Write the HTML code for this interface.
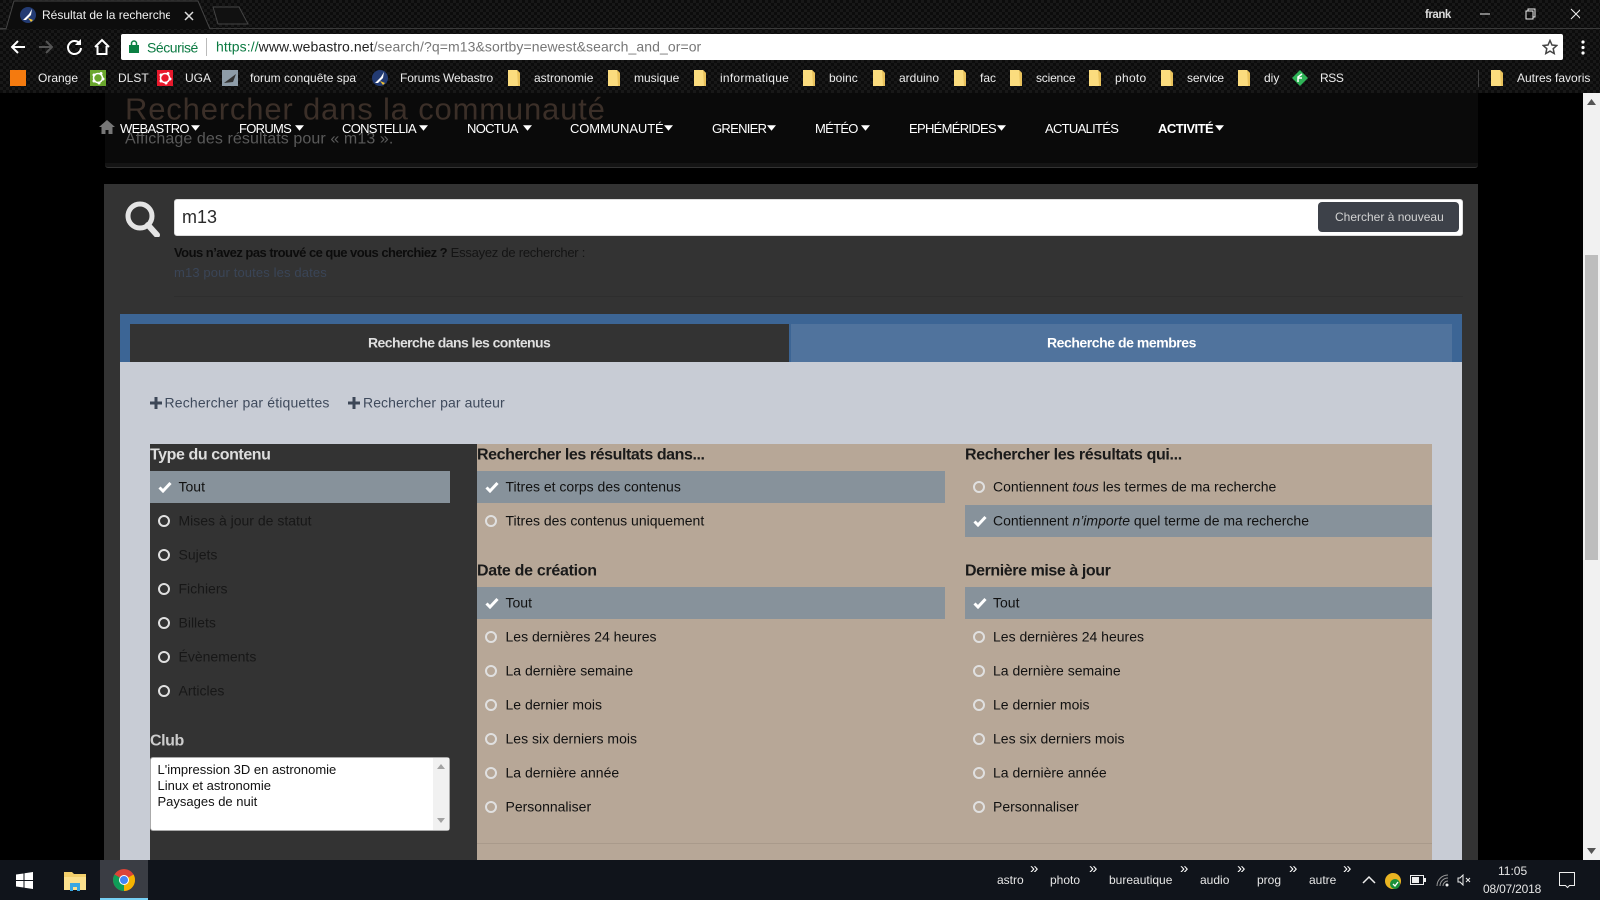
<!DOCTYPE html>
<html lang="fr"><head><meta charset="utf-8"><title>Résultat de la recherche</title>
<style>
html,body{margin:0;padding:0;width:1600px;height:900px;overflow:hidden;background:#000;font-family:"Liberation Sans",sans-serif}
.a{position:absolute}
.t{position:absolute;white-space:nowrap;transform:translateY(-50%);line-height:1.2}
#chrome{position:absolute;left:0;top:0;width:1600px;height:93px;background-color:#0c0c0c;background-image:linear-gradient(45deg,#181818 25%,transparent 25%,transparent 75%,#181818 75%),linear-gradient(45deg,#181818 25%,transparent 25%,transparent 75%,#181818 75%);background-size:6px 6px;background-position:0 0,3px 3px}
.bm{font-size:12px;color:#ececec}
.nav{font-size:13px;color:#fff;top:129px;letter-spacing:-.7px}
.h{font-size:16px;font-weight:bold;letter-spacing:-.42px}
.r{font-size:14px;color:#111}
.dk{color:#171717}
.sel{position:absolute;height:32px;background:#87929b}
.o{position:absolute;width:8px;height:8px;border:2.5px solid #e0e0e0;border-radius:50%;transform:translateY(-50%)}
.ck{position:absolute;transform:translateY(-50%)}
.tb{font-size:12px;color:#e6e6e6;top:880px}
.gt{font-size:15px;color:#fff;top:869px}
</style></head><body>
<svg width="0" height="0" style="position:absolute"><defs>
<symbol id="fd" viewBox="0 0 12 16"><path d="M0 0h9l3 3v13H0z" fill="#fbdc7e"/><path d="M9 0l3 3v13h-2z" fill="#e9c25c"/></symbol>
<symbol id="c" viewBox="0 0 14 12"><path d="M1.500 6.500l3.500 3.500 7.500-8" fill="none" stroke="#fff" stroke-width="3"/></symbol>
<symbol id="p" viewBox="0 0 12 12"><path d="M0 4.500h4.500V0h3v4.500H12v3H7.500V12h-3V7.500H0z" fill="#3c4656"/></symbol>
<symbol id="tr" viewBox="0 0 10 6"><path d="M0 0h10L5 6z" fill="#fff"/></symbol>
<symbol id="fav" viewBox="0 0 16 16"><circle cx="8" cy="8" r="8" fill="#233b73"/><path d="M3 13L9 7l3-5-1 6-5 5z" fill="#fff"/><path d="M8 11l3 4 2-2z" fill="#f2c230"/></symbol>
<symbol id="fl" viewBox="0 0 16 16"><rect width="16" height="16"/><circle cx="8" cy="8" r="4.500" fill="none" stroke="#fff" stroke-width="1.500"/><circle cx="4" cy="5" r="1.500" fill="#fff"/><circle cx="11" cy="3.500" r="1.500" fill="#fff"/><circle cx="13" cy="9" r="1.500" fill="#fff"/><circle cx="9" cy="13" r="1.500" fill="#fff"/><circle cx="4" cy="11" r="1.500" fill="#fff"/></symbol>
</defs></svg>

<!-- page header -->
<div class="a" style="left:105px;top:93px;width:1373px;height:70px;background:#0a0a0a"></div>
<div class="a" style="left:105px;top:163px;width:1373px;height:5px;background:#141414;border-bottom:1px solid #333;box-sizing:border-box;border-radius:0 0 3px 3px"></div>
<div class="t" style="left:125px;top:109px;font-size:31px;color:#3b2f28;letter-spacing:.83px">Rechercher dans la communauté</div>
<div class="t" style="left:125px;top:139px;font-size:16px;color:#5a5a5a;letter-spacing:.1px">Affichage des résultats pour « m13 ».</div>
<svg class="a" style="left:99px;top:120px" width="16" height="14" viewBox="0 0 16 14"><path d="M8 0L0 7h2.500v7h4v-4h3v4h4V7H16z" fill="#777"/></svg>
<div class="t nav" style="left:120px">WEBASTRO</div><svg class="a" style="left:191px;top:125px" width="9" height="6"><use href="#tr"/></svg>
<div class="t nav" style="left:239px">FORUMS</div><svg class="a" style="left:295px;top:125px" width="9" height="6"><use href="#tr"/></svg>
<div class="t nav" style="left:342px">CONSTELLIA</div><svg class="a" style="left:419px;top:125px" width="9" height="6"><use href="#tr"/></svg>
<div class="t nav" style="left:467px">NOCTUA</div><svg class="a" style="left:523px;top:125px" width="9" height="6"><use href="#tr"/></svg>
<div class="t nav" style="left:570px;letter-spacing:-.1px">COMMUNAUTÉ</div><svg class="a" style="left:664px;top:125px" width="9" height="6"><use href="#tr"/></svg>
<div class="t nav" style="left:712px">GRENIER</div><svg class="a" style="left:767px;top:125px" width="9" height="6"><use href="#tr"/></svg>
<div class="t nav" style="left:815px">MÉTÉO</div><svg class="a" style="left:861px;top:125px" width="9" height="6"><use href="#tr"/></svg>
<div class="t nav" style="left:909px">EPHÉMÉRIDES</div><svg class="a" style="left:997px;top:125px" width="9" height="6"><use href="#tr"/></svg>
<div class="t nav" style="left:1045px">ACTUALITÉS</div>
<div class="t nav" style="left:1158px;font-weight:bold;letter-spacing:-.5px">ACTIVITÉ</div><svg class="a" style="left:1215px;top:125px" width="9" height="6"><use href="#tr"/></svg>

<!-- main panel -->
<div class="a" style="left:104px;top:184px;width:1374px;height:676px;background:#333"></div>
<svg class="a" style="left:125px;top:201px" width="36" height="36" viewBox="0 0 36 36"><circle cx="15" cy="15" r="12" fill="none" stroke="#e4e4e4" stroke-width="5"/><path d="M23 24l9 10" stroke="#e4e4e4" stroke-width="6" stroke-linecap="round"/></svg>
<div class="a" style="left:174px;top:199px;width:1289px;height:37px;background:#fff;border-radius:3px;box-sizing:border-box;border:1px solid #ddd"></div>
<div class="t" style="left:182px;top:218px;font-size:18px;color:#2a2a2a">m13</div>
<div class="a" style="left:1318px;top:202px;width:141px;height:30px;background:#3d4149;border-radius:4px"></div>
<div class="t" style="left:1335px;top:217px;font-size:12px;color:#d2d2d2">Chercher à nouveau</div>
<div class="t" style="left:174px;top:253px;font-size:13px;color:#0c0c0c"><b style="letter-spacing:-.53px">Vous n’avez pas trouvé ce que vous cherchiez ?</b> <span style="color:#141414;letter-spacing:-.25px">Essayez de rechercher :</span></div>
<div class="t" style="left:174px;top:273px;font-size:13px;color:#3a4557;letter-spacing:.13px">m13 pour toutes les dates</div>
<div class="a" style="left:174px;top:296px;width:1289px;height:1px;background:#2e2e2e"></div>

<div class="a" style="left:120px;top:314px;width:1342px;height:48px;background:#3c6595"></div>
<div class="a" style="left:130px;top:324px;width:659px;height:38px;background:#333"></div>
<div class="a" style="left:791px;top:324px;width:661px;height:38px;background:#50739d"></div>
<div class="t" style="left:368px;top:343px;font-size:14px;font-weight:bold;color:#dfdfdf;letter-spacing:-.57px">Recherche dans les contenus</div>
<div class="t" style="left:1047px;top:343px;font-size:14px;font-weight:bold;color:#fff;letter-spacing:-.45px">Recherche de membres</div>
<div class="a" style="left:120px;top:362px;width:1342px;height:498px;background:#c8ccd5"></div>

<svg class="a" style="left:150px;top:397px" width="12" height="12"><use href="#p"/></svg>
<div class="t" style="left:164.500px;top:403px;font-size:14px;color:#3f4a5c;letter-spacing:.16px">Rechercher par étiquettes</div>
<svg class="a" style="left:348px;top:397px" width="12" height="12"><use href="#p"/></svg>
<div class="t" style="left:363px;top:403px;font-size:14px;color:#3f4a5c;letter-spacing:.08px">Rechercher par auteur</div>

<div class="a" style="left:150px;top:444px;width:327px;height:416px;background:#333"></div>
<div class="a" style="left:477px;top:444px;width:955px;height:416px;background:#b7a797"></div>

<!-- column 1 -->
<div class="t h" style="left:150px;top:455px;color:#ddd">Type du contenu</div>
<div class="sel" style="left:150px;top:471px;width:300px"></div>
<svg class="ck" style="left:158px;top:487px" width="14" height="12"><use href="#c"/></svg>
<div class="t r" style="left:178.500px;top:487px">Tout</div>
<div class="o" style="left:158px;top:521px"></div><div class="t r dk" style="left:178.500px;top:521px">Mises à jour de statut</div>
<div class="o" style="left:158px;top:555px"></div><div class="t r dk" style="left:178.500px;top:555px">Sujets</div>
<div class="o" style="left:158px;top:589px"></div><div class="t r dk" style="left:178.500px;top:589px">Fichiers</div>
<div class="o" style="left:158px;top:623px"></div><div class="t r dk" style="left:178.500px;top:623px">Billets</div>
<div class="o" style="left:158px;top:657px"></div><div class="t r dk" style="left:178.500px;top:657px">Évènements</div>
<div class="o" style="left:158px;top:691px"></div><div class="t r dk" style="left:178.500px;top:691px">Articles</div>
<div class="t h" style="left:150px;top:741px;color:#ccc">Club</div>
<div class="a" style="left:150px;top:757px;width:300px;height:74px;background:#fff;border:1px solid #aaa;box-sizing:border-box;border-radius:3px"></div>
<div class="a" style="left:433px;top:758px;width:16px;height:72px;background:#f1f1f1"></div>
<svg class="a" style="left:437px;top:764px" width="8" height="5"><path d="M0 5h8L4 0z" fill="#a3a3a3"/></svg>
<svg class="a" style="left:437px;top:818px" width="8" height="5"><path d="M0 0h8L4 5z" fill="#a3a3a3"/></svg>
<div class="t" style="left:157.500px;top:769.500px;font-size:13px;color:#111">L'impression 3D en astronomie</div>
<div class="t" style="left:157.500px;top:785.500px;font-size:13px;color:#111">Linux et astronomie</div>
<div class="t" style="left:157.500px;top:801.500px;font-size:13px;color:#111">Paysages de nuit</div>

<!-- column 2 -->
<div class="t h" style="left:477px;top:455px;color:#1a1a1a">Rechercher les résultats dans...</div>
<div class="sel" style="left:477px;top:471px;width:468px"></div>
<svg class="ck" style="left:485px;top:487px" width="14" height="12"><use href="#c"/></svg>
<div class="t r" style="left:505.500px;top:487px">Titres et corps des contenus</div>
<div class="o" style="left:485px;top:521px"></div><div class="t r" style="left:505.500px;top:521px">Titres des contenus uniquement</div>
<div class="t h" style="left:477px;top:570.500px;color:#1a1a1a;letter-spacing:-.3px">Date de création</div>
<div class="sel" style="left:477px;top:587px;width:468px"></div>
<svg class="ck" style="left:485px;top:603px" width="14" height="12"><use href="#c"/></svg>
<div class="t r" style="left:505.500px;top:603px">Tout</div>
<div class="o" style="left:485px;top:637px"></div><div class="t r" style="left:505.500px;top:637px">Les dernières 24 heures</div>
<div class="o" style="left:485px;top:671px"></div><div class="t r" style="left:505.500px;top:671px">La dernière semaine</div>
<div class="o" style="left:485px;top:705px"></div><div class="t r" style="left:505.500px;top:705px">Le dernier mois</div>
<div class="o" style="left:485px;top:739px"></div><div class="t r" style="left:505.500px;top:739px">Les six derniers mois</div>
<div class="o" style="left:485px;top:773px"></div><div class="t r" style="left:505.500px;top:773px">La dernière année</div>
<div class="o" style="left:485px;top:807px"></div><div class="t r" style="left:505.500px;top:807px">Personnaliser</div>

<!-- column 3 -->
<div class="t h" style="left:965px;top:455px;color:#1a1a1a;letter-spacing:-.35px">Rechercher les résultats qui...</div>
<div class="o" style="left:973px;top:487px"></div><div class="t r" style="left:993px;top:487px">Contiennent <i>tous</i> les termes de ma recherche</div>
<div class="sel" style="left:965px;top:505px;width:467px"></div>
<svg class="ck" style="left:973px;top:521px" width="14" height="12"><use href="#c"/></svg>
<div class="t r" style="left:993px;top:521px">Contiennent <i>n’importe</i> quel terme de ma recherche</div>
<div class="t h" style="left:965px;top:570.500px;color:#1a1a1a;letter-spacing:-.42px">Dernière mise à jour</div>
<div class="sel" style="left:965px;top:587px;width:467px"></div>
<svg class="ck" style="left:973px;top:603px" width="14" height="12"><use href="#c"/></svg>
<div class="t r" style="left:993px;top:603px">Tout</div>
<div class="o" style="left:973px;top:637px"></div><div class="t r" style="left:993px;top:637px">Les dernières 24 heures</div>
<div class="o" style="left:973px;top:671px"></div><div class="t r" style="left:993px;top:671px">La dernière semaine</div>
<div class="o" style="left:973px;top:705px"></div><div class="t r" style="left:993px;top:705px">Le dernier mois</div>
<div class="o" style="left:973px;top:739px"></div><div class="t r" style="left:993px;top:739px">Les six derniers mois</div>
<div class="o" style="left:973px;top:773px"></div><div class="t r" style="left:993px;top:773px">La dernière année</div>
<div class="o" style="left:973px;top:807px"></div><div class="t r" style="left:993px;top:807px">Personnaliser</div>
<div class="a" style="left:477px;top:843px;width:955px;height:1px;background:#a99a8b"></div>

<!-- scrollbar -->
<div class="a" style="left:1583px;top:93px;width:17px;height:767px;background:#f1f1f1"></div>
<div class="a" style="left:1585px;top:255px;width:13px;height:305px;background:#bdbdbd"></div>
<svg class="a" style="left:1587px;top:99px" width="9" height="6"><path d="M0 6h9L4.500 0z" fill="#555"/></svg>
<svg class="a" style="left:1587px;top:848px" width="9" height="6"><path d="M0 0h9L4.500 6z" fill="#555"/></svg>

<!-- chrome -->
<div id="chrome"></div>
<div class="a" style="left:0;top:28px;width:1600px;height:1px;background:#3a3a3a"></div>
<svg class="a" style="left:0;top:0" width="250" height="30"><path d="M0 29H6L14 1H198L210 29" fill="#0d0d0d" stroke="#444"/><path d="M213 7h26l9 17h-30z" fill="#111" stroke="#444"/></svg>
<svg class="a" style="left:20px;top:7px" width="16" height="16"><use href="#fav"/></svg>
<div class="t" style="left:42px;top:15px;font-size:12px;color:#f2f2f2;width:128px;overflow:hidden">Résultat de la recherche -</div>
<svg class="a" style="left:184px;top:11px" width="10" height="10"><path d="M1 1l8 8M9 1l-8 8" stroke="#ddd" stroke-width="1.500"/></svg>
<div class="t" style="left:1425px;top:15.500px;font-size:11.500px;font-weight:bold;color:#ddd;letter-spacing:-.45px">frank</div>
<svg class="a" style="left:1480px;top:8px" width="100" height="12"><path d="M0 6h10" stroke="#eee"/><path d="M46 3h7v8h-7zM48 3V1h7v8h-2" fill="none" stroke="#eee"/><path d="M91 1l10 10M101 1l-10 10" stroke="#eee"/></svg>
<!-- toolbar -->
<svg class="a" style="left:10px;top:38px" width="105" height="18" viewBox="0 0 105 18"><path d="M15 9H3M8 3L2 9l6 6" fill="none" stroke="#fff" stroke-width="2"/><path d="M29 9h12M36 3l6 6-6 6" fill="none" stroke="#555" stroke-width="2"/><path d="M70 6a6.500 6.500 0 1 0 1 4" fill="none" stroke="#fff" stroke-width="2"/><path d="M71 1v6h-6z" fill="#fff"/><path d="M85 9l7-7 7 7M87.500 8v8h9V8" fill="none" stroke="#fff" stroke-width="2"/></svg>
<div class="a" style="left:121px;top:34px;width:1442px;height:26px;background:#fff;border-radius:2px"></div>
<svg class="a" style="left:129px;top:40px" width="10" height="13" viewBox="0 0 10 13"><path d="M2.500 6V3.500a2.500 2.500 0 0 1 5 0V6" fill="none" stroke="#0b8043" stroke-width="1.500"/><rect y="5" width="10" height="8" fill="#0b8043"/></svg>
<div class="t" style="left:147px;top:47.500px;font-size:14px;color:#0b7a42;letter-spacing:-.45px">Sécurisé</div>
<div class="a" style="left:206px;top:38px;width:1px;height:18px;background:#bbb"></div>
<div class="t" style="left:216px;top:47px;font-size:14px;color:#777;letter-spacing:.08px"><span style="color:#0b7a42">https://</span><span style="color:#222">www.webastro.net</span>/search/?q=m13&amp;sortby=newest&amp;search_and_or=or</div>
<svg class="a" style="left:1542px;top:39px" width="16" height="16" viewBox="0 0 16 16"><path d="M8 1.500l2 4.500 4.800.5-3.600 3.200 1 4.800L8 12.100l-4.200 2.400 1-4.800L1.200 6.500 6 6z" fill="none" stroke="#444" stroke-width="1.500"/></svg>
<svg class="a" style="left:1581px;top:40px" width="4" height="15"><circle cx="2" cy="2" r="1.600" fill="#fff"/><circle cx="2" cy="7.500" r="1.600" fill="#fff"/><circle cx="2" cy="13" r="1.600" fill="#fff"/></svg>
<!-- bookmarks -->
<div class="a" style="left:10px;top:70px;width:16px;height:16px;background:#f47a0f"></div>
<div class="t bm" style="left:38px;top:78px">Orange</div>
<svg class="a" style="left:90px;top:70px" width="16" height="16"><use href="#fl" fill="#6aa62d"/></svg>
<div class="t bm" style="left:118px;top:78px">DLST</div>
<svg class="a" style="left:157px;top:70px" width="16" height="16"><use href="#fl" fill="#e8192c"/></svg>
<div class="t bm" style="left:185px;top:78px">UGA</div>
<div class="a" style="left:222px;top:70px;width:16px;height:16px;background:#8e9ca8"></div>
<svg class="a" style="left:222px;top:70px" width="16" height="16"><path d="M2 13L14 4l-3 8z" fill="#333"/></svg>
<div class="t bm" style="left:250px;top:78px;width:107px;overflow:hidden">forum conquête spatiale</div>
<svg class="a" style="left:372px;top:70px" width="16" height="16"><use href="#fav"/></svg>
<div class="t bm" style="left:400px;top:78px;letter-spacing:-.14px">Forums Webastro</div>
<svg class="a" style="left:508px;top:70px" width="12" height="16"><use href="#fd"/></svg><div class="t bm" style="left:534px;top:78px">astronomie</div>
<svg class="a" style="left:608px;top:70px" width="12" height="16"><use href="#fd"/></svg><div class="t bm" style="left:634px;top:78px">musique</div>
<svg class="a" style="left:694px;top:70px" width="12" height="16"><use href="#fd"/></svg><div class="t bm" style="left:720px;top:78px;letter-spacing:.25px">informatique</div>
<svg class="a" style="left:803px;top:70px" width="12" height="16"><use href="#fd"/></svg><div class="t bm" style="left:829px;top:78px">boinc</div>
<svg class="a" style="left:873px;top:70px" width="12" height="16"><use href="#fd"/></svg><div class="t bm" style="left:899px;top:78px">arduino</div>
<svg class="a" style="left:954px;top:70px" width="12" height="16"><use href="#fd"/></svg><div class="t bm" style="left:980px;top:78px">fac</div>
<svg class="a" style="left:1010px;top:70px" width="12" height="16"><use href="#fd"/></svg><div class="t bm" style="left:1036px;top:78px;letter-spacing:-.2px">science</div>
<svg class="a" style="left:1089px;top:70px" width="12" height="16"><use href="#fd"/></svg><div class="t bm" style="left:1115px;top:78px;letter-spacing:.3px">photo</div>
<svg class="a" style="left:1161px;top:70px" width="12" height="16"><use href="#fd"/></svg><div class="t bm" style="left:1187px;top:78px;letter-spacing:-.15px">service</div>
<svg class="a" style="left:1238px;top:70px" width="12" height="16"><use href="#fd"/></svg><div class="t bm" style="left:1264px;top:78px">diy</div>
<svg class="a" style="left:1292px;top:70px" width="16" height="16"><path d="M8 0l8 8-8 8-8-8z" fill="#2fb457"/><path d="M6 12V7l4-3M6 8h4" stroke="#fff" stroke-width="1.500" fill="none"/></svg>
<div class="t bm" style="left:1320px;top:78px;letter-spacing:-.4px">RSS</div>
<div class="a" style="left:1478px;top:70px;width:1px;height:17px;background:#444"></div>
<svg class="a" style="left:1491px;top:70px" width="12" height="16"><use href="#fd"/></svg><div class="t bm" style="left:1517px;top:78px">Autres favoris</div>

<!-- taskbar -->
<div class="a" style="left:0;top:860px;width:1600px;height:40px;background:#10141b"></div>
<svg class="a" style="left:16px;top:872px" width="17" height="17"><path d="M0 2.500l7.500-1v6.500H0zM8.500 1.300L17 0v8H8.500zM0 9h7.500v6.500L0 14.500zM8.500 9H17v8l-8.500-1.200z" fill="#fff"/></svg>
<svg class="a" style="left:64px;top:871px" width="22" height="20" viewBox="0 0 22 20"><path d="M0 1h8l2 2h12v16H0z" fill="#f2cf6b"/><path d="M0 6h22v13H0z" fill="#fbe08d"/><path d="M6 12h10v8h-3v-4H9v4H6z" fill="#38a7e3"/></svg>
<div class="a" style="left:100px;top:860px;width:48px;height:40px;background:#3a3d44"></div>
<div class="a" style="left:100px;top:898px;width:48px;height:2px;background:#76d0f5"></div>
<svg class="a" style="left:113px;top:869px" width="22" height="22" viewBox="0 0 22 22"><circle cx="11" cy="11" r="11" fill="#db4437"/><path d="M11 11L1.500 5.500A11 11 0 0 0 11 22z" fill="#0f9d58"/><path d="M11 11V22A11 11 0 0 0 20.500 5.500z" fill="#f4b400"/><circle cx="11" cy="11" r="5" fill="#fff"/><circle cx="11" cy="11" r="4" fill="#4285f4"/></svg>
<div class="t tb" style="left:997px">astro</div><div class="t gt" style="left:1030px">»</div>
<div class="t tb" style="left:1050px">photo</div><div class="t gt" style="left:1089px">»</div>
<div class="t tb" style="left:1109px">bureautique</div><div class="t gt" style="left:1180px">»</div>
<div class="t tb" style="left:1200px">audio</div><div class="t gt" style="left:1237px">»</div>
<div class="t tb" style="left:1257px">prog</div><div class="t gt" style="left:1289px">»</div>
<div class="t tb" style="left:1309px">autre</div><div class="t gt" style="left:1343px">»</div>
<svg class="a" style="left:1362px;top:875px" width="14" height="9"><path d="M1 8l6-6 6 6" fill="none" stroke="#eee" stroke-width="1.500"/></svg>
<svg class="a" style="left:1385px;top:872px" width="16" height="18"><circle cx="8" cy="9" r="8" fill="#e9b422"/><circle cx="10" cy="12" r="5" fill="#1b8f3a"/><path d="M8 12l2 2 3-4" stroke="#fff" stroke-width="1.300" fill="none"/></svg>
<svg class="a" style="left:1410px;top:875px" width="16" height="10"><rect x=".5" y=".5" width="13" height="9" fill="none" stroke="#eee"/><rect x="2" y="2" width="7" height="6" fill="#eee"/><rect x="14" y="3" width="2" height="4" fill="#eee"/></svg>
<svg class="a" style="left:1436px;top:874px" width="14" height="13" viewBox="0 0 14 13"><path d="M1 12a11 11 0 0 1 11-11M4 12a8 8 0 0 1 8-8M7 12a5 5 0 0 1 5-5" fill="none" stroke="#999"/><circle cx="11" cy="11" r="1.500" fill="#eee"/></svg>
<svg class="a" style="left:1457px;top:874px" width="14" height="12"><path d="M1 4h2l3-3v10L3 8H1z" fill="none" stroke="#eee"/><path d="M9 4l4 4M13 4l-4 4" stroke="#eee"/></svg>
<div class="t" style="left:1498px;top:871px;font-size:12px;color:#e6e6e6">11:05</div>
<div class="t" style="left:1483px;top:889px;font-size:12px;color:#e6e6e6;letter-spacing:-.2px">08/07/2018</div>
<svg class="a" style="left:1559px;top:872px" width="17" height="17"><path d="M.5.500h15v13h-5l-2 2-2-2h-6z" fill="none" stroke="#eee"/></svg>
</body></html>
